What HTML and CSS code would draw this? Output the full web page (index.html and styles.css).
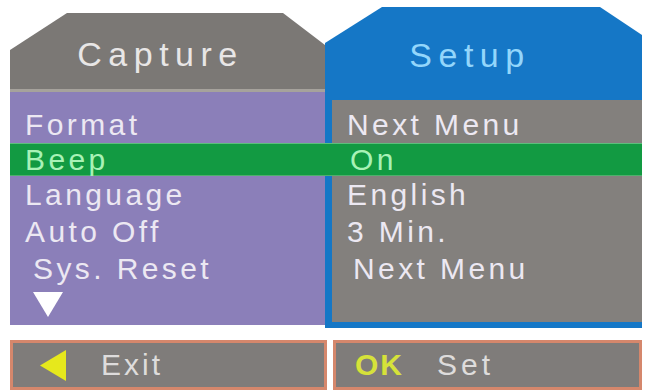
FILE: index.html
```html
<!DOCTYPE html>
<html>
<head>
<meta charset="utf-8">
<link rel="stylesheet" href="styles.css">
</head>
<body>
<div class="screen">
  <div class="pane pane-left">
    <div class="tab tab-capture"><span>Capture</span></div>
    <div class="list list-left">
      <div class="row">Format</div>
      <div class="row sel">Beep</div>
      <div class="row">Language</div>
      <div class="row">Auto Off</div>
      <div class="row indent">Sys. Reset</div>
      <svg class="more" width="30" height="26" viewBox="0 0 30 26"><polygon points="0,1 30,1 15,26" fill="#ffffff"/></svg>
    </div>
  </div>
  <div class="pane pane-right">
    <div class="tab tab-setup"><span>Setup</span></div>
    <div class="list list-right">
      <div class="row">Next Menu</div>
      <div class="row sel">On</div>
      <div class="row">English</div>
      <div class="row">3 Min.</div>
      <div class="row indent">Next Menu</div>
    </div>
  </div>
</div>
<div class="bar">
  <div class="key key-exit">
    <svg class="back" width="26" height="31" viewBox="0 0 26 31"><polygon points="0,15.5 26,0 26,31" fill="#e6e81c"/></svg>
    <span class="label">Exit</span>
  </div>
  <div class="key key-ok">
    <span class="ok">OK</span>
    <span class="label label-set">Set</span>
  </div>
</div>
</body>
</html>
```
FILE: styles.css
```css
html, body {
  margin: 0;
  padding: 0;
  background: #ffffff;
  width: 645px;
  height: 392px;
  overflow: hidden;
  font-family: "Liberation Sans", Arial, sans-serif;
}

.screen {
  display: flex;
  align-items: flex-start;
  padding: 7px 3px 0 10px;
}

.pane-left {
  width: 315px;
  margin-top: 6px;
}

.tab {
  font-size: 34px;
  line-height: 39px;
  letter-spacing: 6.5px;
  text-align: center;
  box-sizing: border-box;
}

.tab-capture {
  height: 79px;
  background: #7b7875;
  border-bottom: 3px solid #a6a29c;
  color: #e8e6e6;
  clip-path: polygon(57px 0, 273px 0, 315px 32px, 315px 100%, 0 100%, 0 37px);
  padding: 22px 14px 0 0;
}

.list {
  box-sizing: border-box;
}

.list-left {
  height: 233px;
  background: #8b7fb9;
  padding-top: 14px;
}

.row {
  font-size: 30px;
  letter-spacing: 3.4px;
  line-height: 37px;
  height: 37px;
  color: #ece8f2;
  white-space: nowrap;
}

.row.sel {
  line-height: 33px;
  height: 33px;
  background: #129a42;
  box-shadow: inset 0 1px 0 #5cbf7c, inset 0 -1px 0 #4fb06c;
  color: #a8f2b6;
}

.list-left .row {
  padding-left: 15px;
}

.list-left .row.indent {
  padding-left: 23px;
}

.more {
  display: block;
  margin: 4px 0 0 23px;
}

.pane-right {
  width: 317px;
  background: #1577c6;
  clip-path: polygon(57px 0, 275px 0, 317px 28px, 317px 100%, 0 100%, 0 36px);
}

.tab-setup {
  height: 93px;
  color: #93d6fb;
  padding: 29px 27px 0 0;
}

.list-right {
  margin: 0 0 6px 7px;
  height: 222px;
  background: #83807d;
  padding-top: 6px;
}

.list-right .row {
  padding-left: 15px;
}

.list-right .row.sel {
  margin-left: -7px;
  padding-left: 25px;
}

.list-right .row.indent {
  padding-left: 21px;
}

.bar {
  display: flex;
  gap: 6px;
  padding: 12px 3px 0 10px;
}

.key {
  box-sizing: border-box;
  height: 50px;
  border: 3px solid #d5876c;
  background: #7f7c7a;
  display: flex;
  align-items: center;
  font-size: 30px;
  letter-spacing: 3px;
}

.key-exit {
  width: 317px;
  padding-left: 27px;
}

.key-ok {
  width: 309px;
  padding-left: 19px;
}

.back {
  display: block;
  margin-right: 35px;
}

.label {
  color: #dedcdc;
}

.label-set {
  letter-spacing: 4px;
}

.ok {
  color: #d6e23a;
  font-weight: bold;
  letter-spacing: 2px;
  margin-right: 33px;
}
```
